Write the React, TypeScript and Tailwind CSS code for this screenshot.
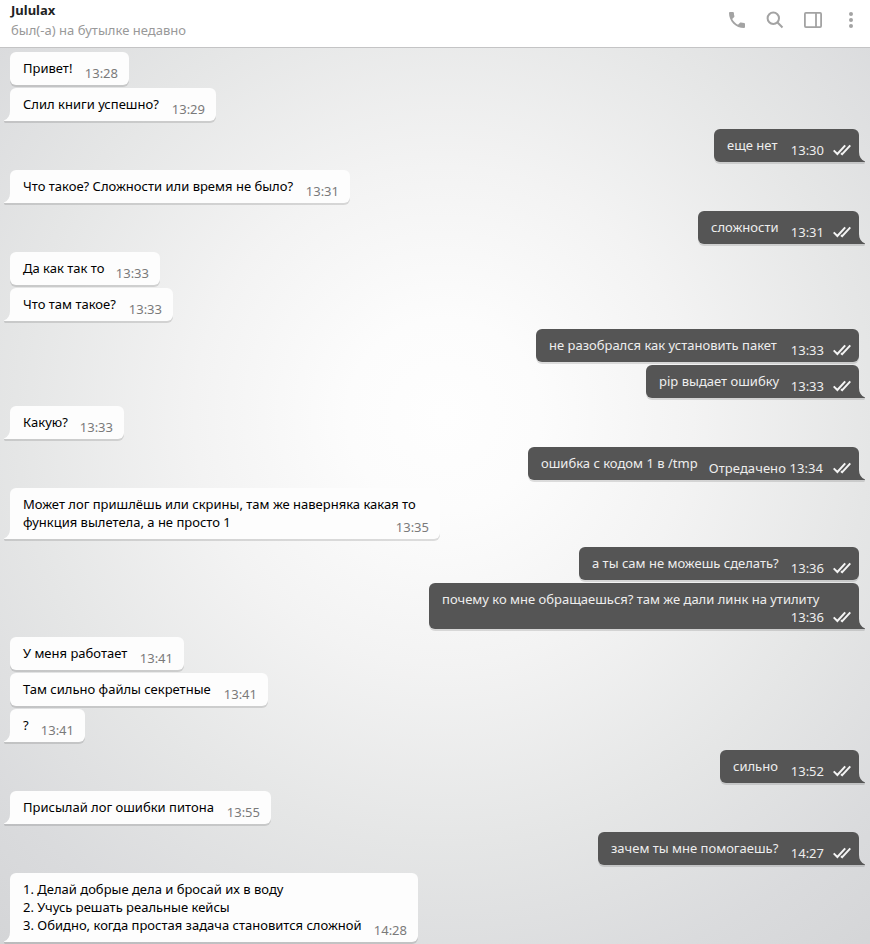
import React from 'react'
import clsx from 'clsx'

interface Message {
  text: string
  time: string
  width: string
  out?: boolean
  tail?: boolean
  edited?: boolean
  height?: string
}

const messages: Message[] = [
  { text: 'Привет!', time: '13:28', width: 'w-[119px]' },
  { text: 'Слил книги успешно?', time: '13:29', width: 'w-[206px]', tail: true },
  { text: 'еще нет', time: '13:30', width: 'w-[145px]', out: true, tail: true },
  { text: 'Что такое? Сложности или время не было?', time: '13:31', width: 'w-[340px]', tail: true },
  { text: 'сложности', time: '13:31', width: 'w-[161px]', out: true, tail: true },
  { text: 'Да как так то', time: '13:33', width: 'w-[150px]' },
  { text: 'Что там такое?', time: '13:33', width: 'w-[163px]', tail: true },
  { text: 'не разобрался как установить пакет', time: '13:33', width: 'w-[323px]', out: true },
  { text: 'pip выдает ошибку', time: '13:33', width: 'w-[213px]', out: true, tail: true },
  { text: 'Какую?', time: '13:33', width: 'w-[114px]', tail: true },
  { text: 'ошибка с кодом 1 в /tmp', time: '13:34', width: 'w-[331px]', out: true, tail: true, edited: true },
  {
    text: 'Может лог пришлёшь или скрины, там же наверняка какая то\nфункция вылетела, а не просто 1',
    time: '13:35',
    width: 'w-[430px]',
    height: 'h-[51px]',
    tail: true,
  },
  { text: 'а ты сам не можешь сделать?', time: '13:36', width: 'w-[280px]', out: true },
  {
    text: 'почему ко мне обращаешься? там же дали линк на утилиту',
    time: '13:36',
    width: 'w-[430px]',
    height: 'h-[46px]',
    out: true,
    tail: true,
  },
  { text: 'У меня работает', time: '13:41', width: 'w-[174px]' },
  { text: 'Там сильно файлы секретные', time: '13:41', width: 'w-[258px]' },
  { text: '?', time: '13:41', width: 'w-[75px]', tail: true },
  { text: 'сильно', time: '13:52', width: 'w-[139px]', out: true, tail: true },
  { text: 'Присылай лог ошибки питона', time: '13:55', width: 'w-[261px]', tail: true },
  { text: 'зачем ты мне помогаешь?', time: '14:27', width: 'w-[261px]', out: true, tail: true },
  {
    text: '1. Делай добрые дела и бросай их в воду\n2. Учусь решать реальные кейсы\n3. Обидно, когда простая задача становится сложной',
    time: '14:28',
    width: 'w-[408px]',
    height: 'h-[69px]',
    tail: true,
  },
]

const Checks = () => (
  <svg width="18" height="12" viewBox="0 0 18 12" fill="none" stroke="#f4f4f4" strokeWidth="2">
    <path d="M0.7 6.4 L4.4 10 L12.2 1.4" />
    <path d="M8 9.2 L9.2 10.2 L17.3 1.4" />
  </svg>
)

const Tail = ({ out }: { out?: boolean }) => (
  <svg
    className={clsx('absolute bottom-[-2px]', out ? 'right-[-6px]' : 'left-[-6px] -scale-x-100')}
    width="12"
    height="14"
    viewBox="0 0 12 14"
  >
    <path d="M6 12 H12 V13 L11 14 H6 Z" fill="#000" fillOpacity="0.12" />
    <path d="M0 0 H6 V2 C6 6.5 8 9.8 12 11.6 V12 H0 Z" fill={out ? '#555555' : '#fdfdfd'} />
  </svg>
)

const Bubble = ({ text, time, width, height, out, tail, edited }: Message) => (
  <div
    className={clsx(
      'relative flex shrink-0 flex-col items-start rounded-[6px] pt-[7px] pl-[13px] text-[13px] leading-[18px] whitespace-pre shadow-[0_2px_0_rgba(0,0,0,0.12)]',
      width,
      height ?? 'h-[33px]',
      out ? 'self-end bg-[#555555] text-[#eeeeee]' : 'self-start bg-[#fdfdfd] text-black',
      tail && (out ? 'rounded-br-none' : 'rounded-bl-none'),
      tail ? 'mb-2' : 'mb-[3px]',
    )}
  >
    {tail && <Tail out={out} />}
    {text.split('\n').map((line) => (
      <p key={line}>{line}</p>
    ))}
    <div
      className={clsx(
        'absolute bottom-[3px] flex items-center',
        out ? 'right-2 text-[#eeeeee]' : 'right-[11px] text-[#7a7a7a]',
      )}
    >
      <span className={clsx(edited && 'tracking-[0.07px]')}>{edited ? `Отредачено ${time}` : time}</span>
      {out && (
        <span className={edited ? 'ml-[10px]' : 'ml-[9px]'}>
          <Checks />
        </span>
      )}
    </div>
  </div>
)

const Header = () => (
  <header className="flex h-12 shrink-0 justify-between border-b border-[#c4c4c5] bg-white pr-[10px] pl-[11px]">
    <div className="pt-px text-[13px]">
      <h1 className="leading-[18px] font-bold text-[#222]">Jululax</h1>
      <p className="pt-[2px] leading-[18px] tracking-[0.03px] text-[#999]">был(-а) на бутылке недавно</p>
    </div>
    <div className="flex h-10 items-center text-[#a3a3a3]">
      <svg className="mr-5" width="18" height="18" viewBox="0 0 18 18" fill="currentColor">
        <path d="M1 1.9 C1 1.4 1.4 1 1.9 1 H5 C5.5 1 5.9 1.4 5.9 1.9 C5.9 3 6.1 4.1 6.4 5.1 C6.5 5.4 6.4 5.8 6.2 6 L4.2 8 C5.5 10.4 7.6 12.5 10 13.8 L12 11.8 C12.2 11.6 12.6 11.5 12.9 11.6 C13.9 11.9 15 12.1 16.1 12.1 C16.6 12.1 17 12.5 17 13 V16.1 C17 16.6 16.6 17 16.1 17 C7.8 17 1 10.2 1 1.9 Z" />
      </svg>
      <svg className="mr-5" width="18" height="18" viewBox="0 0 18 18" fill="none" stroke="currentColor" strokeWidth="2">
        <circle cx="7.3" cy="7.3" r="5.7" />
        <path d="M11.3 11.3 L16.5 16.5" />
      </svg>
      <svg className="mr-[27px]" width="18" height="16" viewBox="0 0 18 16" fill="none" stroke="currentColor" strokeWidth="1.8">
        <rect x="0.9" y="0.9" width="16.2" height="14.2" rx="1" />
        <path d="M12 1 V15" />
      </svg>
      <svg className="mr-[7px]" width="4" height="16" viewBox="0 0 4 16" fill="currentColor">
        <circle cx="2" cy="2" r="2" />
        <circle cx="2" cy="8" r="2" />
        <circle cx="2" cy="14" r="2" />
      </svg>
    </div>
  </header>
)

const App: React.FC = () => (
  <div className="flex h-[944px] w-[870px] flex-col overflow-hidden bg-white font-['Noto_Sans',sans-serif]">
    <Header />
    <main className="flex min-h-0 flex-1 flex-col overflow-hidden bg-[radial-gradient(circle_at_51%_41%,#fefefe_0%,#fcfcfc_14%,#f3f3f3_36%,#e5e6e6_62%,#dadbdd_84%,#d4d5d7_100%)] pt-1 pr-[11px] pl-[10px]">
      {messages.map((message, index) => (
        <Bubble key={index} {...message} />
      ))}
    </main>
  </div>
)

export default App
